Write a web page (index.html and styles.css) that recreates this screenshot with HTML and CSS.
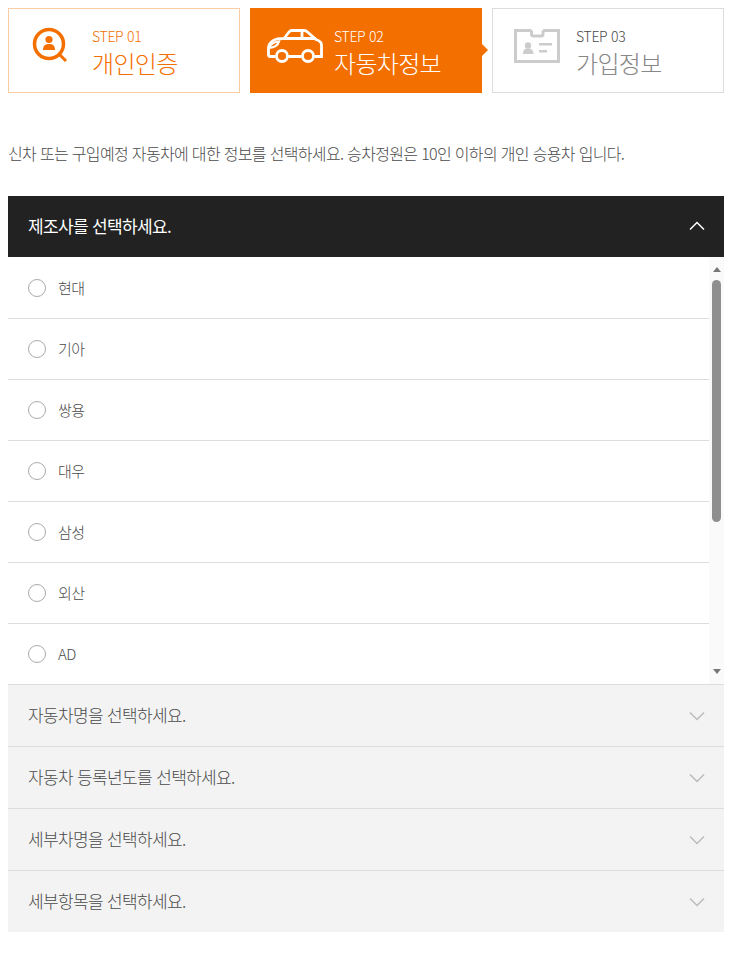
FILE: index.html
```html
<!DOCTYPE html>
<html lang="ko">
<head>
<meta charset="UTF-8" />
<meta name="viewport" content="width=device-width, initial-scale=1" />
<title>자동차정보</title>
<link rel="stylesheet" href="styles.css">
</head>
<body>

<ul class="steps">
  <li class="step done">
    <svg class="step-icon" width="40" height="40" viewBox="0 0 40 40">
      <circle cx="18" cy="18" r="14.5" fill="none" stroke="#f36f00" stroke-width="3.5"/>
      <path d="M28.5 28.5L35 35" stroke="#f36f00" stroke-width="3" fill="none"/>
      <circle cx="18" cy="13.5" r="3.6" fill="#f36f00"/>
      <path d="M12 24c0-4.500 2.400-6 6-6s6 1.500 6 6z" fill="#f36f00"/>
    </svg>
    <div class="step-text">
      <span class="step-no">STEP 01</span>
      <strong class="step-name">개인인증</strong>
    </div>
  </li>
  <li class="step active">
    <svg class="step-icon" width="56" height="34" viewBox="0 0 56 34">
      <path d="M8.500 27.500H3c-1 0-1.500-.8-1.500-2V18c0-3 4-7 8.500-8l7-.5L22 3c.8-1 1.500-1.500 3-1.500h12c1.500 0 2.500.5 3.500 1.500L49 10.500c3.500 1 5.500 2.500 5.500 5.500v11.500h-7M34.500 27.500h-13" fill="none" stroke="#fff" stroke-width="2.800"/>
      <path d="M17 9.500H49M35 2v7.500" fill="none" stroke="#fff" stroke-width="2.800"/>
      <circle cx="15" cy="27" r="5.500" fill="none" stroke="#fff" stroke-width="2.800"/>
      <circle cx="41" cy="27" r="5.500" fill="none" stroke="#fff" stroke-width="2.800"/>
      <path d="M2 19c1.500-3.500 5-6 10-6.500-1 3.500-4.500 6-10 6.500z" fill="none" stroke="#fff" stroke-width="2.200"/>
    </svg>
    <div class="step-text">
      <span class="step-no">STEP 02</span>
      <strong class="step-name">자동차정보</strong>
    </div>
  </li>
  <li class="step">
    <svg class="step-icon" width="46" height="34" viewBox="0 0 46 34">
      <path d="M17.500 1.500H1.500v31h43v-31H29M17.500 1.500V5c0 1.300.7 2 2 2h7.500c1.300 0 2-.7 2-2V1.500" fill="none" stroke="#ccc" stroke-width="3"/>
      <circle cx="14" cy="16.500" r="3.200" fill="#ccc"/>
      <path d="M9 25c0-4 1.500-5.500 5-5.500S19.500 21 19.500 25z" fill="#ccc"/>
      <path d="M25 14h13v2.500H25zM25 21h8v2.500h-8z" fill="#ccc"/>
    </svg>
    <div class="step-text">
      <span class="step-no">STEP 03</span>
      <strong class="step-name">가입정보</strong>
    </div>
  </li>
</ul>

<p class="intro">신차 또는 구입예정 자동차에 대한 정보를 선택하세요. 승차정원은 10인 이하의 개인 승용차 입니다.</p>

<div class="accordion">
  <div class="acc-head open">
    <span>제조사를 선택하세요.</span>
    <svg class="chevron" width="16" height="10" viewBox="0 0 16 10"><path d="M1 8.500L8 1.500l7 7" fill="none" stroke="#fff" stroke-width="1.500"/></svg>
  </div>
  <div class="acc-body">
    <ul class="options">
      <li class="option"><span class="radio"></span>현대</li>
      <li class="option"><span class="radio"></span>기아</li>
      <li class="option"><span class="radio"></span>쌍용</li>
      <li class="option"><span class="radio"></span>대우</li>
      <li class="option"><span class="radio"></span>삼성</li>
      <li class="option"><span class="radio"></span>외산</li>
      <li class="option"><span class="radio"></span>AD</li>
    </ul>
    <div class="scrollbar">
      <span class="arrow up"></span>
      <span class="thumb"></span>
      <span class="arrow down"></span>
    </div>
  </div>
  <div class="acc-head">
    <span>자동차명을 선택하세요.</span>
    <svg class="chevron" width="16" height="10" viewBox="0 0 16 10"><path d="M1 1.500l7 7 7-7" fill="none" stroke="#bbb" stroke-width="1.500"/></svg>
  </div>
  <div class="acc-head">
    <span>자동차 등록년도를 선택하세요.</span>
    <svg class="chevron" width="16" height="10" viewBox="0 0 16 10"><path d="M1 1.500l7 7 7-7" fill="none" stroke="#bbb" stroke-width="1.500"/></svg>
  </div>
  <div class="acc-head">
    <span>세부차명을 선택하세요.</span>
    <svg class="chevron" width="16" height="10" viewBox="0 0 16 10"><path d="M1 1.500l7 7 7-7" fill="none" stroke="#bbb" stroke-width="1.500"/></svg>
  </div>
  <div class="acc-head">
    <span>세부항목을 선택하세요.</span>
    <svg class="chevron" width="16" height="10" viewBox="0 0 16 10"><path d="M1 1.500l7 7 7-7" fill="none" stroke="#bbb" stroke-width="1.500"/></svg>
  </div>
</div>

</body>
</html>
```

FILE: styles.css
```css
* {
  box-sizing: border-box;
}
body {
  margin: 8px 10px 25px 8px;
  font-family: "Noto Sans CJK KR", "Noto Sans", sans-serif;
  font-weight: 300;
  color: #4a4a4a;
}
ul {
  list-style: none;
  margin: 0;
  padding: 0;
}
.steps {
  display: flex;
  gap: 10px;
}
.step {
  flex: 1;
  height: 85px;
  display: flex;
  align-items: center;
  border: 1px solid #ddd;
  position: relative;
}
.step-icon {
  flex: none;
  margin: -10px 0 0 21px;
}
.step.done {
  border-color: #f9cba0;
  color: #f36f00;
}
.step.done .step-icon {
  margin-left: 22px;
}
.step.active {
  background: #f36f00;
  border-color: #f36f00;
  color: #fff;
}
.step.active .step-icon {
  margin-left: 16px;
}
.step.active::after {
  content: "";
  position: absolute;
  right: -7px;
  top: 35px;
  border-left: 6px solid #f36f00;
  border-top: 6px solid transparent;
  border-bottom: 6px solid transparent;
}
.step-text {
  display: flex;
  flex-direction: column;
  position: absolute;
  left: 83px;
  top: 17px;
}
.step-no {
  font-size: 14px;
  line-height: 20px;
  letter-spacing: -0.3px;
}
.step-name {
  font-size: 24px;
  line-height: 34px;
  font-weight: 300;
  letter-spacing: -0.7px;
}
.step:last-child .step-name {
  color: #888;
}
.intro {
  margin: 49px 0 32px;
  font-size: 16px;
  line-height: 22px;
  letter-spacing: -0.67px;
}
.acc-head {
  height: 62px;
  padding: 0 19px 3px 20px;
  display: flex;
  align-items: center;
  justify-content: space-between;
  background: #f3f3f3;
  border-top: 1px solid #ddd;
  font-size: 17px;
  letter-spacing: -0.65px;
}
.acc-head.open {
  height: 61px;
  background: #222;
  border-top: 0;
  color: #fff;
  font-weight: 400;
}
.chevron {
  margin-top: 4px;
}
.open .chevron {
  margin-top: 2px;
}
.acc-body {
  display: flex;
  height: 427px;
  overflow: hidden;
}
.options {
  flex: 1;
  padding-top: 1px;
}
.option {
  height: 61px;
  display: flex;
  align-items: center;
  padding: 0 0 2px 20px;
  border-bottom: 1px solid #ddd;
  font-size: 15px;
  letter-spacing: -0.5px;
}
.radio {
  width: 18px;
  height: 18px;
  margin: 2px 12px 0 0;
  border: 1px solid #aaa;
  border-radius: 50%;
}
.scrollbar {
  width: 15px;
  background: #fafafa;
  display: flex;
  flex-direction: column;
  align-items: center;
  position: relative;
}
.thumb {
  width: 9px;
  height: 242px;
  margin-top: 23px;
  border-radius: 5px;
  background: #8f8f8f;
}
.arrow {
  position: absolute;
  border-left: 4.500px solid transparent;
  border-right: 4.500px solid transparent;
}
.arrow.up {
  top: 10px;
  border-bottom: 5px solid #777;
}
.arrow.down {
  bottom: 10px;
  border-top: 5px solid #777;
}
```
